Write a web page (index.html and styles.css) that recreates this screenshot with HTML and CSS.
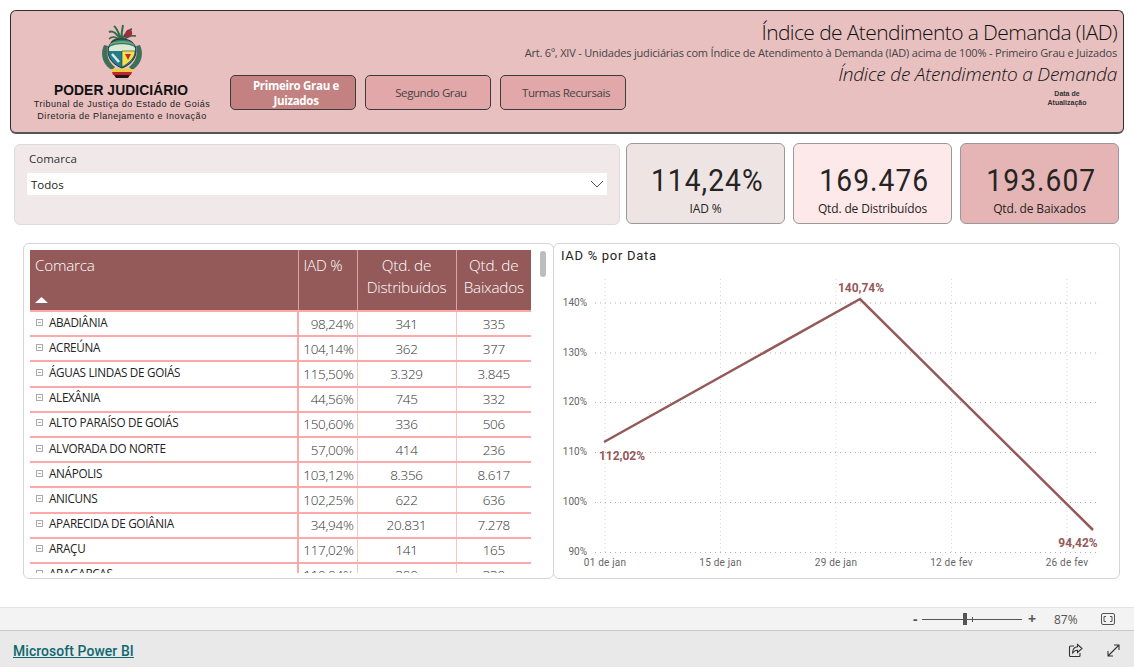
FILE: index.html
```html
<!DOCTYPE html>
<html lang="pt-BR">
<head>
<meta charset="utf-8">
<title>Índice de Atendimento a Demanda (IAD)</title>
<link rel="stylesheet" href="styles.css">
</head>
<body>
<main class="report">
  <header class="banner">
    <div class="brand">
      <svg class="crest" viewBox="0 0 42 56" width="42" height="56" aria-hidden="true">
        <path d="M21 17 C15 9 12 6 8 8 M21 17 C17 8 16 4 13 2 M21 17 C20 9 21 5 22 1 M21 17 C24 9 27 6 31 5" fill="none" stroke="#2f6d4a" stroke-width="2"/>
        <path d="M21 17 C14 12 11 12 8 15 M21 17 C27 12 31 11 35 12 M21 17 C16 13 12 16 10 19" fill="none" stroke="#3b5d45" stroke-width="1.600"/>
        <circle cx="28" cy="9" r="3.200" fill="#a52a3a"/>
        <circle cx="25" cy="12" r="1.800" fill="#8d2a3c"/>
        <path d="M3 21 C-1 30 1 40 11 46 L14 43 C7 38 5 30 7 22 Z" fill="#3f6f58"/>
        <path d="M39 21 C43 30 41 40 31 46 L28 43 C35 38 37 30 35 22 Z" fill="#3f6f58"/>
        <path d="M7 27 C7 19 13 15 21 15 C29 15 35 19 35 27 C35 35 29 41 21 44 C13 41 7 35 7 27 Z" fill="#1f7d8c" stroke="#28343a" stroke-width="1"/>
        <path d="M8 24 C11 19 31 19 34 24 L34 27 L8 27 Z" fill="#dfe9d2"/>
        <path d="M8 22 C12 18 30 18 34 22 L33 20 C29 16 13 16 9 20 Z" fill="#7ca35d"/>
        <path d="M21 27 L34 27 C34 34 28 39 21 43 Z" fill="#f4e24c" stroke="#2b3a3c" stroke-width=".6"/>
        <path d="M24 30 h6 l-3 6 Z" fill="#c4283a"/>
        <path d="M11 30 L18 38" stroke="#dcebee" stroke-width="2.500"/>
        <path d="M10 45 h22 l-1 3 h-20 Z" fill="#e8d23a"/>
        <path d="M11 48 h20 l-1 3 h-18 Z" fill="#c8202c"/>
        <path d="M13 51 h16 l-2 3 h-12 Z" fill="#1b1b1b"/>
      </svg>
      <div class="brand-name">PODER JUDICIÁRIO</div>
      <div class="brand-line">Tribunal de Justiça do Estado de Goiás</div>
      <div class="brand-line">Diretoria de Planejamento e Inovação</div>
    </div>
    <nav class="tabs">
      <button class="tab tab-active">Primeiro Grau e Juizados</button>
      <button class="tab">Segundo Grau</button>
      <button class="tab">Turmas Recursais</button>
    </nav>
    <div class="titles">
      <h1 class="title">Índice de Atendimento a Demanda (IAD)</h1>
      <p class="subtitle">Art. 6º, XIV - Unidades judiciárias com Índice de Atendimento à Demanda (IAD) acima de 100% - Primeiro Grau e Juizados</p>
      <h2 class="title-italic">Índice de Atendimento a Demanda</h2>
      <div class="update">Data de<br>Atualização</div>
    </div>
  </header>

  <section class="kpis">
    <div class="slicer">
      <div class="slicer-label">Comarca</div>
      <div class="select">
        <span>Todos</span>
        <svg width="14" height="8" viewBox="0 0 14 8" aria-hidden="true"><path d="M1 1 L7 7 L13 1" fill="none" stroke="#555" stroke-width="1"/></svg>
      </div>
    </div>
    <div class="card card-grey"><div class="card-value">114,24%</div><div class="card-label">IAD %</div></div>
    <div class="card card-light"><div class="card-value">169.476</div><div class="card-label">Qtd. de Distribuídos</div></div>
    <div class="card card-rose"><div class="card-value">193.607</div><div class="card-label">Qtd. de Baixados</div></div>
  </section>

  <section class="panels">
    <div class="panel table-panel">
      <div class="table-clip">
        <table class="grid">
          <thead>
            <tr>
              <th class="c-name">Comarca<svg class="sort" width="13" height="6" viewBox="0 0 13 6" aria-hidden="true"><path d="M0 6 L6.500 0 L13 6 Z" fill="#fff"/></svg></th>
              <th class="c-iad">IAD %</th>
              <th class="c-dist">Qtd. de Distribuídos</th>
              <th class="c-baix">Qtd. de Baixados</th>
            </tr>
          </thead>
          <tbody>
            <tr><td class="c-name"><i class="expand"></i>ABADIÂNIA</td><td class="c-iad">98,24%</td><td>341</td><td>335</td></tr>
            <tr><td class="c-name"><i class="expand"></i>ACREÚNA</td><td class="c-iad">104,14%</td><td>362</td><td>377</td></tr>
            <tr><td class="c-name"><i class="expand"></i>ÁGUAS LINDAS DE GOIÁS</td><td class="c-iad">115,50%</td><td>3.329</td><td>3.845</td></tr>
            <tr><td class="c-name"><i class="expand"></i>ALEXÂNIA</td><td class="c-iad">44,56%</td><td>745</td><td>332</td></tr>
            <tr><td class="c-name"><i class="expand"></i>ALTO PARAÍSO DE GOIÁS</td><td class="c-iad">150,60%</td><td>336</td><td>506</td></tr>
            <tr><td class="c-name"><i class="expand"></i>ALVORADA DO NORTE</td><td class="c-iad">57,00%</td><td>414</td><td>236</td></tr>
            <tr><td class="c-name"><i class="expand"></i>ANÁPOLIS</td><td class="c-iad">103,12%</td><td>8.356</td><td>8.617</td></tr>
            <tr><td class="c-name"><i class="expand"></i>ANICUNS</td><td class="c-iad">102,25%</td><td>622</td><td>636</td></tr>
            <tr><td class="c-name"><i class="expand"></i>APARECIDA DE GOIÂNIA</td><td class="c-iad">34,94%</td><td>20.831</td><td>7.278</td></tr>
            <tr><td class="c-name"><i class="expand"></i>ARAÇU</td><td class="c-iad">117,02%</td><td>141</td><td>165</td></tr>
            <tr><td class="c-name"><i class="expand"></i>ARAGARÇAS</td><td class="c-iad">110,04%</td><td>300</td><td>330</td></tr>
          </tbody>
        </table>
      </div>
      <div class="scrollbar"></div>
    </div>
    <div class="panel chart-panel">
      <svg class="chart" viewBox="554 243 566 335" width="566" height="335">
        <text class="chart-title" x="561" y="258.500">IAD % por Data</text>
        <g class="v-grid">
          <path d="M605 278V551M720.500 278V551M836 278V551M951.500 278V551M1067 278V551"/>
        </g>
        <g class="h-grid">
          <path d="M595 302H1099M595 352H1099M595 401.500H1099M595 451.500H1099M595 501.500H1099M595 551.500H1099"/>
        </g>
        <g class="y-labels">
          <text x="587" y="304.500">140%</text>
          <text x="587" y="354.500">130%</text>
          <text x="587" y="404">120%</text>
          <text x="587" y="454">110%</text>
          <text x="587" y="504">100%</text>
          <text x="587" y="554">90%</text>
        </g>
        <g class="x-labels">
          <text x="605" y="564.500">01 de jan</text>
          <text x="720.500" y="564.500">15 de jan</text>
          <text x="836" y="564.500">29 de jan</text>
          <text x="951.500" y="564.500">12 de fev</text>
          <text x="1067" y="564.500">26 de fev</text>
        </g>
        <polyline class="line" points="604,441 860,298 1093,529"/>
        <g class="values">
          <text x="622" y="458.500">112,02%</text>
          <text x="861" y="291">140,74%</text>
          <text x="1078" y="546">94,42%</text>
        </g>
      </svg>
    </div>
  </section>
</main>

<div class="zoombar">
  <span class="zoom-sign">-</span>
  <div class="slider"><i class="slider-tick"></i><i class="slider-thumb"></i></div>
  <span class="zoom-sign">+</span>
  <span class="zoom-value">87%</span>
  <svg class="fit" width="14" height="12" viewBox="0 0 14 12" aria-hidden="true">
    <rect x=".5" y=".5" width="13" height="11" rx="1.500" fill="none" stroke="#555"/>
    <path d="M5 3.500H3V8.500H5M9 3.500H11V8.500H9" fill="none" stroke="#555"/>
  </svg>
</div>

<footer class="footer">
  <a class="pbi-link" href="#">Microsoft Power BI</a>
  <div class="footer-icons">
    <svg width="15" height="15" viewBox="0 0 15 15" aria-hidden="true">
      <path d="M6 3H2.500A1 1 0 0 0 1.500 4V12.500A1 1 0 0 0 2.500 13.500H11A1 1 0 0 0 12 12.500V10" fill="none" stroke="#333" stroke-width="1.100"/>
      <path d="M9.500 1.500L14 5.500L9.500 9.500V7.200C7 7.200 5.500 8 4.500 10.500C4.500 6.500 6.500 4 9.500 3.800Z" fill="none" stroke="#333" stroke-width="1.100"/>
    </svg>
    <svg width="13" height="13" viewBox="0 0 13 13" aria-hidden="true">
      <path d="M1 12L12 1M7 1H12V6M1 7V12H6" fill="none" stroke="#333" stroke-width="1.100"/>
    </svg>
  </div>
</footer>
</body>
</html>
```

FILE: styles.css
```css
* { box-sizing: border-box; }
html, body { margin: 0; height: 667px; overflow: hidden; background: #fff; }
body { font-family: "Open Sans", "Noto Sans", sans-serif; color: #222; display: flex; flex-direction: column; }

.report { height: 607px; padding: 10px 10px 0; flex: none; }

.banner { height: 124px; background: #e9c0c0; border: 1px solid #2e2e2e; border-bottom: 2px solid #555; border-radius: 6px; display: flex; }
.brand { width: 222px; padding-top: 13px; display: flex; flex-direction: column; align-items: center; flex: none; }
.crest { display: block; margin-left: -1px; }
.brand-name { font-family: "Liberation Sans", sans-serif; font-weight: 700; font-size: 13.800px; line-height: 15px; margin: 3px 2px 0 0; color: #111; letter-spacing: .1px; }
.brand-line { font-family: "Liberation Sans", sans-serif; font-size: 9px; line-height: 12px; color: #222; letter-spacing: .52px; }

.tabs { display: flex; gap: 9px; padding-top: 64px; margin-left: -3px; flex: none; }
.tab { width: 126px; height: 35px; border: 1px solid #3c3c3c; border-radius: 5px; background: #e1a7a9; color: #444; font: 400 11.500px/15px "Open Sans", sans-serif; letter-spacing: -.42px; padding: 0 9px 0 15px; }
.tab-active { background: #c38181; color: #fff; font-weight: 700; letter-spacing: -.3px; }

.titles { flex: 1; min-width: 0; display: flex; flex-direction: column; align-items: flex-end; padding: 7px 6px 0 0; white-space: nowrap; }
.title { margin: 0; font-weight: 300; font-size: 21px; line-height: 28px; color: #111; letter-spacing: -.6px; }
.subtitle { margin: 0; font-size: 11px; line-height: 14px; color: #444; letter-spacing: -.19px; }
.title-italic { margin: 0; font-weight: 300; font-style: italic; font-size: 19px; line-height: 28px; color: #111; letter-spacing: -.2px; }
.update { font: 700 7px/9px "Liberation Sans", sans-serif; color: #333; text-align: center; width: 60px; margin: 1px 20px 0 0; }

.kpis { display: flex; align-items: flex-start; padding: 9px 0 0 4px; }
.slicer { width: 606px; height: 81px; margin-top: 1px; background: #f1e9e9; border: 1px solid #dcdcdc; border-radius: 6px; padding: 6px 12px 0; }
.slicer-label { font-size: 11.500px; line-height: 16px; color: #333; padding-left: 2px; }
.select { height: 22px; margin-top: 6px; background: #fff; display: flex; align-items: center; justify-content: space-between; padding: 0 3px 0 4px; font-size: 11.500px; color: #222; }
.card { width: 159px; height: 81px; margin-left: 8px; border: 1px solid #999; border-radius: 6px; text-align: center; padding-top: 17px; }
.card-grey { margin-left: 6px; background: #eee4e4; }
.card-light { background: #fde9e9; }
.card-rose { background: #e5b5b5; }
.card-value { font-family: "Roboto", sans-serif; font-size: 32px; line-height: 38px; color: #252423; transform: scaleX(.88); letter-spacing: 1.2px; padding-left: 4px; }
.card-label { font-size: 12px; line-height: 16px; margin-top: 2px; color: #252423; letter-spacing: -.15px; }

.panels { display: flex; padding: 18px 0 0 13px; }
.panel { height: 336px; background: #fff; border: 1px solid #d5d5d5; border-radius: 6px; }
.table-panel { width: 531px; padding: 6px 0 0 6px; position: relative; }
.chart-panel { width: 567px; margin-left: -1px; }
.chart { display: block; }

.table-clip { width: 501px; height: 323px; overflow: hidden; }
.grid { border-collapse: collapse; table-layout: fixed; width: 501px; font-size: 12px; }
.grid th { background: #945959; color: #fff; font-weight: 300; font-size: 15.300px; line-height: 22px; vertical-align: top; height: 61px; padding: 4px 2px 3px; border-right: 1px solid #d9a6a6; border-bottom: 2px solid #fda9a9; letter-spacing: -.25px; text-align: center; }
.grid th.c-name { text-align: left; width: 268px; position: relative; padding-left: 5px; }
.grid th.c-iad { text-align: left; width: 59px; padding-left: 5px; white-space: nowrap; }
.grid th.c-dist { width: 99px; }
.grid th.c-baix { width: 75px; border-right: 0; }
.sort { position: absolute; left: 5px; bottom: 7px; }
.grid td { height: 25.200px; padding: 0; border-bottom: 2px solid #fda9a9; border-right: 1px solid #f8c4c4; font-size: 13.500px; font-weight: 300; letter-spacing: -.3px; line-height: 18px; text-align: center; color: #333; }
.grid td:last-child { border-right: 0; }
.grid td.c-name { text-align: left; padding: 0 0 4px 6px; border-right: 2px solid #fda9a9; font-weight: 400; font-size: 11.700px; letter-spacing: -.3px; color: #222; white-space: nowrap; }
.grid td.c-iad { text-align: right; padding-right: 3px; }
.expand { display: inline-block; width: 7px; height: 7px; border: 1px solid #aaa; margin-right: 6px; position: relative; top: -1px; background: linear-gradient(#aaa, #aaa) center / 3px 1px no-repeat; }
.scrollbar { position: absolute; top: 7px; left: 516px; width: 6px; height: 26px; border-radius: 3px; background: #bdbdbd; }

.chart-title { font-size: 13px; letter-spacing: .7px; fill: #252423; font-family: "Roboto", sans-serif; }
.v-grid path { stroke: #d8d8d8; stroke-width: 1; stroke-dasharray: 1 3; fill: none; }
.h-grid path { stroke: #c9a5a5; stroke-width: 1; stroke-dasharray: 1 4; fill: none; }
.y-labels text { font: 10px "Roboto", sans-serif; fill: #666; text-anchor: end; }
.x-labels text { font: 10px "Roboto", sans-serif; fill: #666; text-anchor: middle; letter-spacing: .2px; }
.line { fill: none; stroke: #945959; stroke-width: 2.500; }
.values text { font: 700 12px "Roboto", sans-serif; fill: #945959; text-anchor: middle; }

.zoombar { height: 24px; flex: none; background: #f3f3f3; border-top: 1px solid #e3e3e3; border-bottom: 1px solid #c9c9c9; display: flex; align-items: center; padding-left: 913px; color: #555; }
.zoom-sign { font-size: 14px; font-weight: 700; width: 6px; line-height: 14px; }
.slider { width: 100px; height: 1px; background: #555; margin: 0 6px 0 3px; position: relative; }
.slider-thumb { position: absolute; left: 41px; top: -6px; width: 4px; height: 12px; background: #555; }
.slider-tick { position: absolute; left: 50px; top: -2px; width: 1px; height: 5px; background: #555; }
.zoom-value { font-size: 12px; margin-left: 20px; width: 46px; }
.fit { display: block; margin-left: 1px; }

.footer { flex: 1; background: #e9e9e9; display: flex; align-items: center; justify-content: space-between; padding: 0 14px 0 13px; }
.pbi-link { font-family: "Roboto", sans-serif; font-size: 13.900px; font-weight: 500; color: #0f6870; letter-spacing: .1px; margin-top: 4px; }
.footer-icons { display: flex; align-items: center; gap: 24px; margin-top: 2px; }
.footer-icons svg { display: block; }
```
